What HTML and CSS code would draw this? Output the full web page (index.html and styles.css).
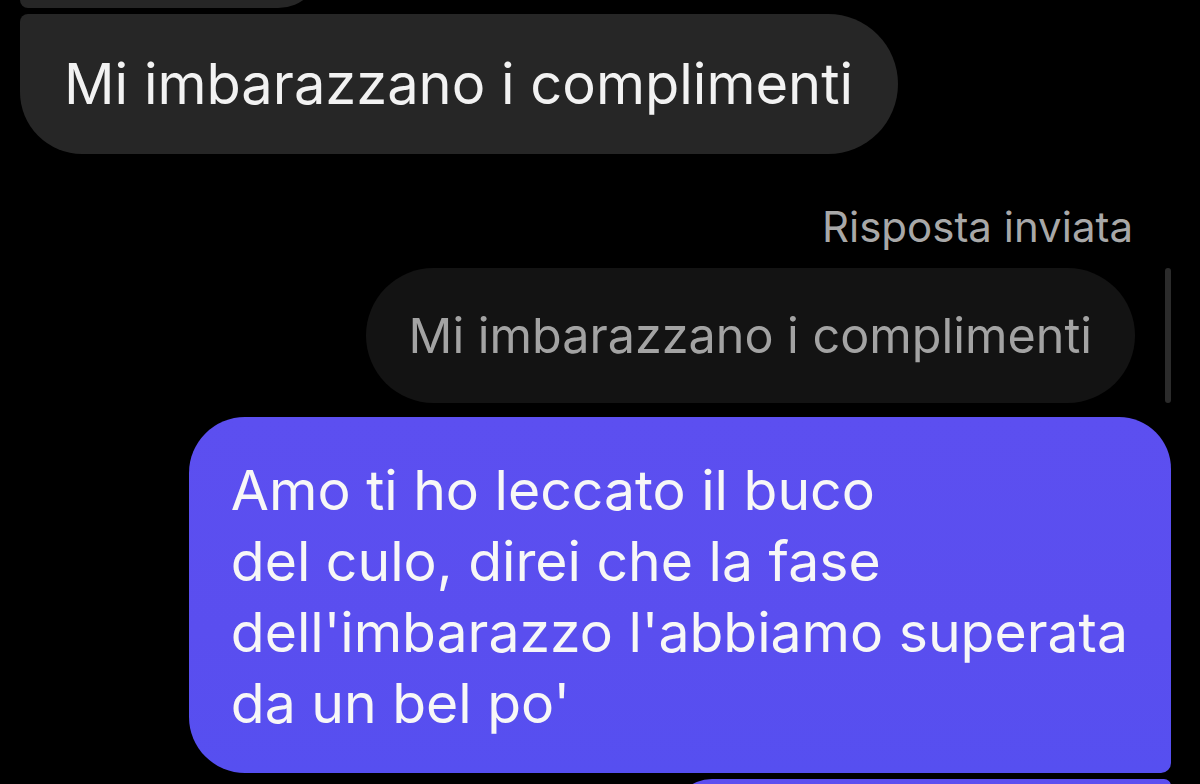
FILE: index.html
```html
<!DOCTYPE html>
<html lang="it">
<head>
<meta charset="utf-8">
<title>Chat</title>
<link rel="stylesheet" href="styles.css">
</head>
<body>
<div class="chat">
  <div class="bubble in partial"></div>
  <div class="bubble in main">Mi imbarazzano i complimenti</div>
  <div class="reply-label">Risposta inviata</div>
  <div class="reply-row">
    <div class="bubble quoted">Mi imbarazzano i complimenti</div>
    <div class="quote-bar"></div>
  </div>
  <div class="bubble out first">Amo ti ho leccato il buco<br>del culo, direi che la fase<br>dell'imbarazzo l'abbiamo superata<br>da un bel po'</div>
  <div class="bubble out next"></div>
</div>
</body>
</html>
```

FILE: styles.css
```css
html, body {
  margin: 0;
  padding: 0;
  background: #000;
  height: 784px;
  overflow: hidden;
}

body {
  font-family: Inter, Roboto, "Liberation Sans", sans-serif;
  color: #f2f2f2;
}

.chat {
  display: flex;
  flex-direction: column;
  padding: 0 29px 0 20px;
}

.bubble {
  box-sizing: border-box;
  white-space: nowrap;
}

.in {
  align-self: flex-start;
  background: #262626;
}

.partial {
  margin-top: -92px;
  width: 302px;
  height: 100px;
  border-radius: 44px 44px 44px 8px;
}

.main {
  margin-top: 6px;
  height: 140px;
  padding: 0 45px 0 44px;
  font-size: 56px;
  line-height: 140px;
  border-radius: 8px 70px 70px 62px;
}

.reply-label {
  align-self: flex-end;
  margin: 48px 38px 0 0;
  font-size: 42px;
  line-height: 50px;
  color: #a8a8a8;
}

.reply-row {
  display: flex;
  justify-content: flex-end;
  align-items: stretch;
  gap: 30px;
  margin-top: 16px;
}

.quoted {
  height: 135px;
  padding: 0 43px 0 43px;
  background: #131313;
  color: #a3a3a3;
  font-size: 48.5px;
  line-height: 135px;
  border-radius: 68px;
}

.quote-bar {
  width: 6px;
  background: #2b2b2b;
  border-radius: 3px;
}

.out {
  align-self: flex-end;
  background: linear-gradient(180deg, #5c4ff0 0%, #5a4eef 60%, #564ff0 100%);
  color: #f7f7f7;
}

.first {
  margin-top: 14px;
  padding: 37px 43px 35px 42px;
  font-size: 55.3px;
  line-height: 71px;
  border-radius: 56px 52px 10px 56px;
}

.next {
  margin-top: 6px;
  width: 499px;
  height: 80px;
  border-radius: 56px 10px 10px 56px;
}
```
